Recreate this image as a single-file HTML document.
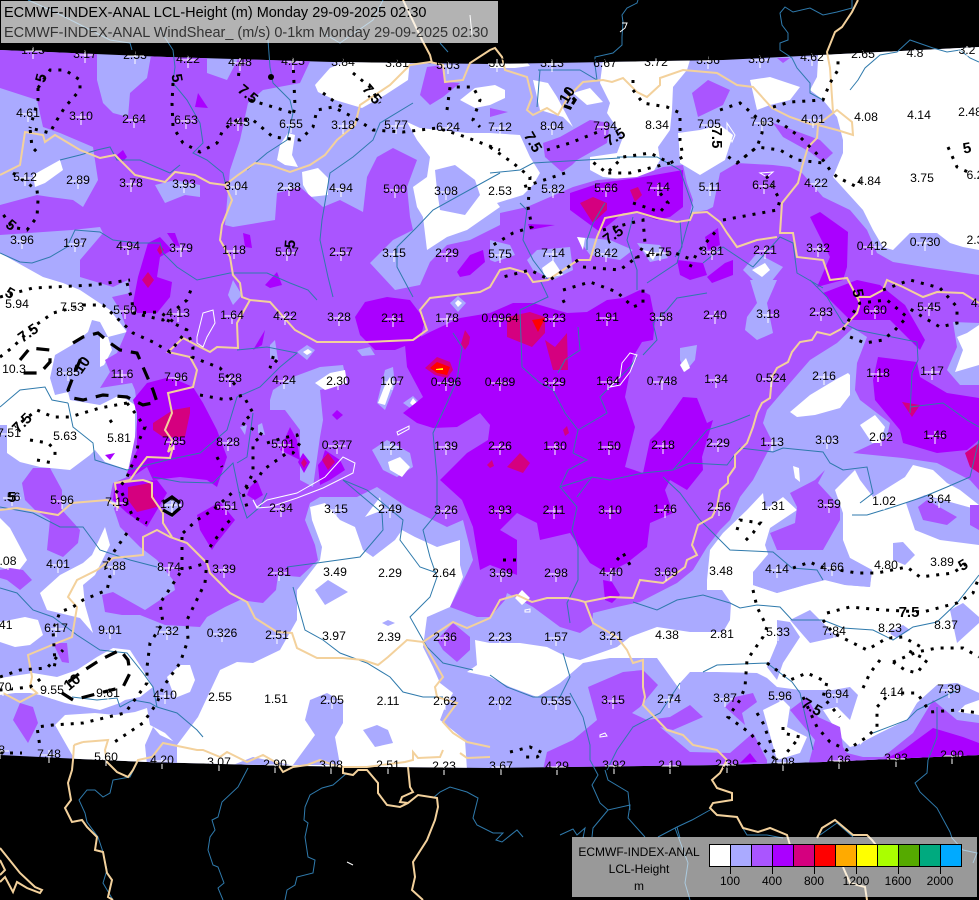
<!DOCTYPE html>
<html><head><meta charset="utf-8"><title>ECMWF-INDEX-ANAL LCL-Height</title>
<style>
html,body{margin:0;padding:0;background:#000;width:979px;height:900px;overflow:hidden}
svg{display:block;font-family:"Liberation Sans",sans-serif}
.w{fill:#fff}.l{fill:#aaf}.p{fill:#a5f}.d{fill:#a0f}.m{fill:#d5007f}
.r{fill:none;stroke:#2f7aac;stroke-width:1}
.b{fill:none;stroke:#f3d19c;stroke-width:2}
.k{fill:none;stroke:#fff;stroke-width:1}
.c{fill:none;stroke:#000;stroke-width:3;stroke-dasharray:3 7}
.e{fill:none;stroke:#000;stroke-width:3.2;stroke-dasharray:13 9}
.t text{font-size:12.2px;text-anchor:middle;fill:#000}
.q text{font-size:15px;font-weight:bold;text-anchor:middle;fill:#000}
.x use{stroke:#fff;stroke-width:1}
</style></head><body>
<svg xmlns="http://www.w3.org/2000/svg" width="979" height="900" viewBox="0 0 979 900">
<defs>
<clipPath id="mp"><polygon points="0,50 167,57 333,62 490,64 723,60 979,47 979,755 823,762 717,765 490,768 300,766 147,762 80,759 0,755"/></clipPath>
<path id="c" d="M-9 1h18M0-4v13"/>
</defs>
<rect width="979" height="900" fill="#000"/>
<g clip-path="url(#mp)">
<rect width="979" height="900" class="l"/>
<g class="w">
<polygon points="315,85 330,68 350,60 410,60 408,80 385,95 362,108 335,100 318,92"/>
<polygon points="33,175 60,160 63,170 45,183 35,187"/>
<polygon points="8,207 25,207 27,215 15,218"/>
<polygon points="0,253 43,277 63,283 80,290 110,310 127,332 108,337 100,322 92,320 88,332 72,345 55,355 50,378 55,395 68,392 70,400 100,405 120,395 135,405 135,440 128,470 105,462 95,450 90,455 70,470 40,467 20,462 7,453 7,425 0,425"/>
<polygon points="100,337 108,337 112,350 104,365 100,367"/>
<polygon points="0,518 10,528 18,543 27,560 17,573 0,567"/>
<polygon points="105,527 110,545 95,575 83,585 85,605 93,633 80,618 47,610 40,593 60,575 83,563 92,555"/>
<polygon points="0,622 25,617 38,620 43,635 30,645 15,647 0,642"/>
<polygon points="0,678 33,673 57,677 77,670 97,657 113,648 130,650 143,670 153,687 140,697 125,700 120,703 100,710 65,703 40,695 30,693 15,693 0,695"/>
<polygon points="167,677 180,665 190,665 195,680 190,692 175,698"/>
<polygon points="310,507 325,503 340,520 355,527 363,550 373,557 395,540 402,530 415,537 437,547 460,540 460,565 463,577 450,607 427,617 423,647 433,667 440,683 453,693 445,707 440,720 465,740 467,770 110,770 75,760 55,725 65,715 95,713 115,715 135,712 147,708 150,725 165,733 177,745 198,717 220,670 237,662 253,663 280,650 297,620 297,590 307,577 320,560 322,547 312,520"/>
<polygon points="475,640 490,643 520,643 547,647 567,657 580,660 617,647 630,637 657,627 690,632 723,632 730,620 731,603 722,590 707,590 707,580 710,550 723,533 747,510 763,493 765,510 783,497 797,510 770,528 765,545 770,560 753,572 753,585 777,593 805,585 825,580 845,585 870,587 872,570 850,558 843,540 843,513 835,490 855,470 860,480 873,497 905,477 913,465 933,470 947,483 960,490 979,505 979,693 957,683 937,685 917,703 907,720 880,733 857,745 850,760 800,760 680,690 657,658 610,658 583,663 560,683 537,697 510,687 490,677 467,672 477,665"/>
<polygon points="818,40 818,60 817,77 810,90 823,100 837,117 843,140 843,153 833,177 863,210 873,230 883,247 893,250 910,233 937,233 950,243 963,247 979,250 979,40"/>
<polygon points="957,337 967,333 979,325 979,365 955,372 963,350"/>
<polygon points="407,122 420,128 467,133 490,133 520,135 530,157 540,173 533,185 523,195 497,203 500,207 467,230 447,237 427,250 423,217 417,207 413,187 427,177 430,157 417,140"/>
<polygon points="460,100 475,88 495,85 505,90 505,98 490,105 475,108"/>
<polygon points="480,290 487,275 495,268 500,267 500,290"/>
<polygon points="277,160 280,145 288,133 295,135 292,155 298,167 285,165"/>
<polygon points="302,172 318,168 328,178 328,195 310,197 303,185"/>
<polygon points="533,80 548,83 557,97 573,127 563,117 540,110 537,97"/>
<polygon points="573,93 590,88 603,102 587,105"/>
<polygon points="603,60 600,83 610,103 607,113 623,137 617,153 590,157 590,170 603,177 630,180 647,183 660,160 658,147 670,130 672,110 673,87 687,70 690,60"/>
<polygon points="678,133 700,130 720,125 733,135 725,160 700,175 680,163 679,145"/>
<polygon points="750,80 770,77 800,87 790,100 770,105 757,110"/>
<polygon points="490,60 525,60 530,66 515,68 490,68"/>
</g>
<g class="l">
<polygon points="435,170 455,165 475,180 480,195 465,215 440,210 437,190"/>
<polygon points="315,590 328,580 348,592 325,605"/>
<polygon points="382,623 388,620 395,623 388,626"/>
<polygon points="305,720 310,700 327,693 343,702 343,723 335,737 340,765 293,765 315,735"/>
<polygon points="363,730 377,725 388,730 393,743 375,747"/>
<polygon points="233,765 253,757 290,765"/>
<polygon points="145,745 153,727 160,735 177,743 177,765 147,765"/>
<polygon points="790,620 810,610 837,637 810,643"/>
<polygon points="777,620 790,622 800,637 783,663 777,680 767,667 777,643"/>
<polygon points="950,610 963,603 979,617 979,623 957,643"/>
<polygon points="887,632 903,625 910,630 897,638"/>
<polygon points="680,683 690,672 717,672 757,673 767,678 777,687 800,690 833,690 850,687 858,695 850,720 837,707 823,710 843,740 850,747 857,745 880,733 907,720 917,703 937,685 957,683 979,693 979,770 680,770"/>
<polygon points="906,503 925,495 979,510 979,545 940,540 915,530"/>
<polygon points="893,543 903,542 915,555 905,565 893,560"/>
<polygon points="753,585 777,593 805,585 825,580 845,585 870,587 872,570 850,558 810,560 770,552 753,572"/>
</g>
<g class="w">
<polygon points="763,710 783,700 790,707 787,727 807,737 800,753 777,760"/>
<polygon points="979,700 965,705 958,712 979,715"/>
<polygon points="860,720 895,690 905,690 917,703 905,715 880,725 860,745"/>
</g>
<g class="p">
<polygon points="0,40 97,40 97,80 103,103 113,113 128,117 130,93 147,78 152,50 207,50 207,73 227,80 240,55 313,55 300,83 263,90 248,103 240,140 230,170 228,190 225,225 233,227 275,220 277,193 300,187 323,207 340,200 363,212 367,177 377,157 393,148 417,160 407,187 410,217 413,230 393,240 370,263 395,290 420,285 430,262 447,245 470,240 500,225 500,213 527,207 550,197 573,187 597,180 637,177 663,167 683,165 687,183 693,200 690,213 707,210 713,207 720,173 737,163 773,165 790,167 802,173 823,197 850,210 867,230 877,253 893,262 930,268 979,275 979,323 953,322 957,347 947,370 960,385 979,385 979,490 970,480 937,463 903,458 853,453 887,437 890,423 860,400 855,390 857,363 867,337 853,328 837,343 810,360 790,383 767,410 763,423 773,443 767,453 753,480 740,497 730,520 720,530 707,547 693,570 677,583 640,602 617,607 593,613 592,625 580,633 560,627 533,607 507,593 505,600 490,617 477,617 450,607 467,573 473,560 463,520 447,527 433,520 407,507 377,487 357,497 320,497 310,503 305,520 315,545 318,560 300,577 278,575 276,590 263,603 240,600 225,607 207,617 200,627 165,625 140,615 122,615 105,612 102,595 113,592 145,610 175,590 173,580 157,560 140,547 120,527 110,497 113,483 127,477 135,437 138,413 135,390 132,383 100,388 110,372 105,360 117,353 127,330 120,310 112,297 130,293 128,280 113,287 80,277 80,260 103,233 100,227 72,230 0,235 0,205 37,195 50,197 73,200 83,207 98,180 93,147 60,133 43,127 37,100 0,88"/>
<polygon points="825,470 818,483 840,507 840,520 823,550 777,550 770,533 795,523 797,507 790,493 815,480"/>
<polygon points="22,483 33,468 50,468 62,490 62,510 80,530 78,543 63,557 47,550 50,520 35,510 25,500"/>
<polygon points="0,570 10,568 23,570 32,580 20,590 7,580 0,578"/>
<polygon points="53,643 67,643 69,663 62,662"/>
<polygon points="13,720 20,703 33,707 38,723 28,743"/>
<polygon points="437,640 453,623 470,637 470,650 457,662 443,650"/>
<polygon points="918,507 927,500 957,517 947,525 923,520"/>
<polygon points="970,505 979,505 979,530 970,525"/>
<polygon points="773,123 785,127 820,140 833,153 823,162 810,152 783,137"/>
<polygon points="490,108 508,112 490,117"/>
<polygon points="692,93 708,80 730,90 723,105 698,117"/>
<polygon points="543,143 560,137 590,120 610,123 607,143 577,160 572,165 562,172 545,157"/>
<polygon points="427,67 443,65 445,82 460,83 443,97 430,105 420,95"/>
<polygon points="777,58 790,58 783,63"/>
<polygon points="588,687 623,672 643,670 658,685 640,707 632,713 647,720 670,717 690,705 703,717 673,730 660,727 690,752 730,753 753,733 767,760 767,770 543,770 547,752 573,740 597,720"/>
<polygon points="725,707 735,697 753,693 757,702 742,713 745,725"/>
<polygon points="790,710 807,697 818,717 840,727 843,747 847,753 863,757 883,757 913,733 933,700 957,720 979,723 979,770 807,770 815,740 800,722"/>
</g>
<g class="l">
<polygon points="155,185 175,180 200,185 200,197 185,195 165,203"/>
<polygon points="233,280 242,295 233,305 228,295"/>
<polygon points="270,400 273,390 293,377 320,367 343,365 347,383 320,390 323,420 320,437 313,487 300,480 300,430 285,410 270,410"/>
<polygon points="377,403 385,370 393,367 395,385 385,410"/>
<polygon points="403,403 413,396 420,403 413,410"/>
<polygon points="372,450 387,440 410,453 413,467 397,477 383,470"/>
<polygon points="517,407 520,402 530,417 522,434 517,425"/>
<polygon points="522,367 533,370 547,380 570,377 587,370 600,383 590,397 573,407 560,410 553,393 537,400 523,383"/>
<polygon points="587,347 593,355 587,365 580,360"/>
<polygon points="588,470 610,457 613,470 607,473"/>
<polygon points="678,437 685,420 693,437 682,435"/>
<polygon points="680,360 680,348 697,345 695,360 685,372"/>
<polygon points="750,280 777,280 767,303 773,333 757,340 745,330 747,317 757,303"/>
<polygon points="527,260 537,250 570,247 573,270 553,280 533,270"/>
<polygon points="577,237 610,240 633,250 620,260 590,255"/>
<polygon points="743,270 757,253 783,267 767,287 753,280"/>
<polygon points="490,240 510,245 515,255 495,262 490,260"/>
<polygon points="637,243 660,245 668,258 650,262"/>
<polygon points="297,352 307,345 315,350 307,360"/>
<polygon points="450,303 458,296 466,303 458,312"/>
<polygon points="357,350 370,347 375,355 362,356"/>
<polygon points="465,385 472,375 475,390 468,392"/>
<polygon points="270,345 275,340 278,360 270,358"/>
<polygon points="240,427 247,425 245,435"/>
<polygon points="258,425 262,423 265,435 258,433"/>
<polygon points="162,505 172,497 182,505 172,518"/>
<polygon points="92,500 105,495 118,505 105,515 95,510"/>
</g>
<g class="w">
<polygon points="315,383 330,373 345,370 347,383 325,390"/>
<polygon points="378,403 385,385 390,377 392,385 385,405"/>
<polygon points="410,403 413,398 417,403 413,406"/>
<polygon points="388,462 400,457 410,467 402,477 390,470"/>
<polygon points="303,352 308,349 312,352 307,355"/>
<polygon points="455,303 458,300 462,303 458,307"/>
<polygon points="365,517 380,497 383,510 370,515"/>
<polygon points="680,365 686,358 690,368 684,372"/>
<polygon points="542,268 553,260 563,275 545,278"/>
<polygon points="577,237 585,238 583,250"/>
<polygon points="643,250 657,253 653,260"/>
<polygon points="752,270 765,263 770,270 762,277"/>
<polygon points="790,412 810,395 835,380 848,373 850,375 850,395 840,408 815,415 797,417"/>
<polygon points="860,425 875,415 885,427 880,443 872,443"/>
<polygon points="793,466 799,468 800,482 795,478"/>
<polygon points="515,598 522,590 530,598 522,605"/>
</g>
<g class="d">
<polygon points="355,317 365,302 387,297 410,300 425,320 420,340 395,350 375,350 360,335"/>
<polygon points="405,345 430,332 445,325 460,318 490,313 513,303 533,303 567,313 587,312 607,300 623,298 640,290 650,295 655,320 653,340 642,342 633,357 625,397 635,427 625,467 643,473 650,440 660,430 683,397 697,398 707,423 713,420 702,457 703,470 687,490 670,480 665,490 673,513 650,523 647,547 627,563 607,573 590,563 570,533 540,540 537,523 517,513 500,530 517,540 517,575 490,565 480,570 473,527 462,500 440,480 467,453 488,440 490,425 480,413 457,427 433,428 417,423 403,413 423,397 407,367"/>
<polygon points="133,400 147,383 170,377 193,387 203,403 217,430 227,457 217,487 207,480 180,477 153,480 147,467 132,477 127,473 137,450 137,413"/>
<polygon points="115,483 113,500 127,513 147,527 157,510 167,493 157,480"/>
<polygon points="197,515 220,502 235,520 215,545 212,550 200,530"/>
<polygon points="570,193 600,183 637,178 683,170 683,207 670,217 657,220 637,213 623,213 600,232 570,210"/>
<polygon points="322,460 325,450 340,460 345,470 330,480 320,485 318,465"/>
<polygon points="298,462 303,453 310,462 304,473"/>
<polygon points="280,450 290,427 297,440 300,460 290,455"/>
<polygon points="250,487 257,480 263,495 255,500 247,495"/>
<polygon points="332,415 337,410 343,415 337,420"/>
<polygon points="253,350 265,330 262,345"/>
<polygon points="117,155 123,150 127,157 122,162"/>
<polygon points="195,107 198,93 208,108"/>
<polygon points="148,243 160,237 172,250 160,257 157,277 172,282 170,297 157,313 137,313 133,303 138,277 143,260"/>
<polygon points="167,233 175,233 180,247 175,245"/>
<polygon points="243,233 250,235 252,248 245,247"/>
<polygon points="265,285 277,272 282,285 270,288"/>
<polygon points="457,272 470,255 483,250 485,262 470,275 460,277"/>
<polygon points="677,260 703,263 707,275 690,280 680,275"/>
<polygon points="707,277 725,263 733,260 733,275 712,283"/>
<polygon points="705,237 718,228 720,245 708,250"/>
<polygon points="528,224 555,225 530,230"/>
<polygon points="810,217 820,212 848,232 847,267 843,280 817,287 823,273 830,257"/>
<polygon points="878,357 917,362 920,377 947,393 979,398 979,440 967,450 937,453 903,443 900,430 875,400 873,380"/>
<polygon points="823,293 857,280 880,285 905,305 925,340 920,350 890,320 870,320 850,320"/>
<polygon points="603,580 612,582 620,595 612,603 605,600"/>
<polygon points="883,760 903,750 933,728 963,737 979,743 979,770 883,770"/>
<polygon points="740,763 750,753 757,762"/>
<polygon points="105,455 115,453 110,460"/>
</g>
<g class="m">
<polygon points="153,423 173,410 190,407 190,413 185,437 163,437 153,430"/>
<polygon points="128,487 150,483 153,493 157,507 137,512 128,500"/>
<polygon points="507,317 530,312 545,317 545,333 532,347 507,337"/>
<polygon points="545,340 555,347 567,333 568,370 553,370"/>
<polygon points="507,467 520,453 530,463 523,473"/>
<polygon points="580,203 593,197 607,203 607,210 593,223"/>
<polygon points="630,190 638,187 642,195 635,202"/>
<polygon points="425,368 437,357 450,362 453,370 447,378 435,375"/>
<polygon points="465,330 470,337 469,344 465,350 461,344"/>
<polygon points="322,460 328,453 335,462 328,470"/>
<polygon points="148,272 154,280 148,288 142,280"/>
<polygon points="160,245 164,250 160,255 157,250"/>
<polygon points="902,402 920,405 912,417"/>
<polygon points="965,453 979,443 979,473 970,467"/>
<polygon points="487,465 492,460 494,466 490,468"/>
<polygon points="563,430 567,426 569,433 565,436"/>
<polygon points="301,463 304,458 307,463 304,468"/>
</g>
<polygon points="532,320 545,318 538,332" fill="#f00"/>
<polygon points="430,368 437,362 450,367 447,375 437,373" fill="#f00"/>
<polygon points="436,369 443,368 443,370 436,370" fill="#ff0"/>
</g>
<g class="r">
<path d="M160 30L173 50 175 67 173 83 187 100 200 123 203 143 193 153 207 160 223 173 227 190"/>
<path d="M268 40L270 67 273 83 290 100 293 113 287 140 267 153 247 170"/>
<path d="M0 253L20 262 32 263 50 257 67 247 75 230 100 232 113 240 137 243 160 243 163 253 177 267 197 280 230 273 267 273 290 283 308 290 317 300"/>
<path d="M500 173L433 210 417 227 397 247 397 267 413 297"/>
<path d="M413 103L380 123 373 140 353 157 330 173 322 220 320 240 328 277 333 297"/>
<path d="M60 160L80 155 97 150 110 147 117 160 140 160 170 173 180 165"/>
<path d="M68 403L73 427 93 443 95 460 127 470 167 460 200 453 227 430 237 397 260 387 280 367 297 353 267 347 237 350"/>
<path d="M153 477L180 482 213 483 233 463 240 497 247 518 260 507 267 493"/>
<path d="M453 333L462 347 457 380 447 403 433 433 437 477 437 513 423 530 430 557 437 577 430 597 410 617 427 647 443 663 473 670"/>
<path d="M343 480L367 490 403 520 400 540 420 567 437 573"/>
<path d="M293 587L305 630 323 640 340 653 367 663 390 677 403 692 423 697 443 697"/>
<path d="M157 707L177 713 197 730 203 737"/>
<path d="M287 567L317 563 360 557 383 530 382 513 343 480"/>
<path d="M253 413L247 457 237 463"/>
<path d="M540 280L548 297 520 310 522 367 540 383 553 390 565 413 578 430 573 453 587 460 568 470 560 487 577 507 572 530 578 547 578 580 567 603 570 623"/>
<path d="M578 327L580 350 565 360 558 373"/>
<path d="M643 355L657 340 653 323 667 310 677 298 707 293"/>
<path d="M637 357L630 367 620 377 600 397 607 413 590 423 578 430"/>
<path d="M560 487L592 477 610 480 643 473 673 470 690 463 727 465 740 448 773 452 783 448 823 452 830 463 843 470 867 467 873 493 860 503"/>
<path d="M673 470L707 430 730 423 750 415"/>
<path d="M663 477L680 493 700 520 720 540 730 550 773 552 792 568 817 570 823 580"/>
<path d="M592 477L577 497"/>
<path d="M852 515L867 515 893 507 923 497 947 487 970 477 979 440"/>
<path d="M810 280L827 297 843 323 857 330 917 342 918 360 912 373 910 413"/>
<path d="M910 407L943 403 967 420 979 427"/>
<path d="M538 70L580 70 597 80 595 65 595 57 613 53 622 45 622 37 623 22 622 15 627 8 637 3 638 0"/>
<path d="M540 70L537 107"/>
<path d="M490 173L520 170 533 163 620 158"/>
<path d="M617 157L657 157 680 170 693 207 687 227 677 263 647 283"/>
<path d="M633 217L627 240 637 270 637 290"/>
<path d="M520 203L527 210 523 240 533 260 548 280"/>
<path d="M605 203L593 223 587 240 587 250"/>
<path d="M852 0L852 8 837 12 823 15 810 8 793 12 785 7 780 13 782 25 788 33 788 40 780 43 780 50 792 58 797 68 810 83 810 93 823 100"/>
<path d="M850 90L858 80 865 68 880 55 897 52 910 40 933 48 947 52 960 50 970 58 979 62"/>
<path d="M703 263L723 247 753 267 780 237 793 243 797 273 823 288"/>
<path d="M680 220L682 247 675 257"/>
<path d="M490 675L507 687 533 697 560 697 570 677 563 653"/>
<path d="M570 693L583 717 590 745 590 760 598 775 592 785 600 803 608 810 630 805 628 818 645 837"/>
<path d="M605 770L608 780 628 792 630 810"/>
<path d="M608 810L593 828 592 837"/>
<path d="M560 835L573 829 577 835 585 828 583 838"/>
<path d="M710 810L692 820 677 827 658 837"/>
<path d="M677 827L680 838"/>
<path d="M742 827L747 835 767 835 783 838"/>
<path d="M820 835L837 823 853 837"/>
<path d="M928 760L927 773 915 783 920 792 937 808 950 832 952 838 963 850 977 853 973 863"/>
<path d="M633 602L657 610 677 600 703 595 730 603 740 608 757 605 780 607 792 620 823 620 843 628 873 630 893 640 913 627 937 622 957 603 979 575"/>
<path d="M703 672L717 665 767 663 792 682 800 693 813 750"/>
<path d="M680 683L660 713 633 727 617 750 607 770"/>
<path d="M937 707L937 737 928 760"/>
<path d="M873 733L907 720 917 710 937 700 957 690"/>
<path d="M137 763L130 777 113 780 110 793 103 797 95 790 87 790 79 800 85 813 87 822 98 837 103 852 107 870 103 883 113 900"/>
<path d="M248 768L238 787 222 802 218 817 212 820 215 830 210 837 208 850 213 865 218 867 224 883 218 888 223 900"/>
<path d="M347 773L333 785 322 788 310 795 305 807 304 820 308 823 305 837 308 857 315 860 313 873 297 877 295 885 287 890 285 900"/>
<path d="M433 798L440 792 450 787 467 792 478 798 473 818 477 825 493 833 503 833 496 840 502 842 517 830 523 837"/>
<path d="M688 863L685 883 690 900"/>
<path d="M675 828L688 863"/>
<path d="M28 0L57 13 110 40 130 43 132 50"/>
<path d="M323 33L340 43 373 20 383 0"/>
<path d="M440 43L448 52"/>
<path d="M0 407L20 390 45 387 52 400 68 403"/>
<path d="M0 507L33 513 60 527 83 527 100 550 130 560 157 567"/>
<path d="M0 588L17 593 33 610 53 617 77 635 100 650 127 653 143 673 153 687 157 707"/>
<path d="M120 707L133 700 150 703 157 707"/>
<path d="M72 697L97 700 117 698 120 707"/>
</g>
<g class="b">
<path d="M0 175L10 170 20 165 25 132 43 135 45 142 55 135 80 150 100 158 115 155 135 175 165 182 175 172 195 175 210 183 225 185 232 200 222 225 220 240 230 257 233 275 240 283 242 297 250 300"/>
<path d="M225 185L238 175 255 163 270 165 290 172 310 165 325 155 337 140 355 125 360 105 390 85 410 65 430 62 443 65 445 82 463 80 470 63 490 50 495 48 502 57 505 70 527 77 532 97 527 110 533 115 547 108 558 115 568 97 583 82 603 80 612 82 623 78 637 92 647 97 660 85 660 78 683 70 717 73 737 85 753 87 772 108 790 117 813 125 820 123 837 110 852 122 853 135 837 130 818 125 817 138 808 147 802 167 798 183 782 203 780 233 793 233 797 257 823 260 830 280 847 278 857 297 860 303 857 313 843 328 830 335 817 332 812 340 800 342 792 352 788 362 777 368 772 377 770 398 762 403 757 413 753 427 747 443 735 455 735 467 728 477 728 483 720 490 717 507 712 517 698 525 692 545 697 555 687 560 685 567 663 583 640 580 633 598 610 597 585 602 578 600 567 598 547 598 532 602 517 595 500 600 490 618 467 628 453 622 423 642 407 640 388 657 378 665 363 660 343 658 317 658 297 648 292 633 277 632 255 618 247 602 230 593 217 580 210 573 207 563 187 543 170 537 157 530 143 537 143 547"/>
<path d="M403 0L422 40 430 55 432 63"/>
<path d="M833 112L830 68 827 52 835 32 842 27 852 12 858 0"/>
<path d="M115 483L143 480 152 483 152 497 163 513 163 523 172 537"/>
<path d="M0 510L17 508 58 515 72 503 107 500 118 507 115 483 130 480 137 470 147 457 170 458 173 447 168 452 172 440 165 430 172 413 168 393 193 387 197 370 190 357 168 352 183 338 200 347 210 352 217 347 238 348 237 323 250 300 270 302 295 330 317 342 367 342 413 340 427 330 420 310 430 298 480 292 490 287 500 270 510 268 527 273 533 282 548 280 578 260 590 260 597 237 605 218 637 212 657 218 677 222 690 220 693 213 707 212 720 222 727 233 737 247 757 240 777 237"/>
<path d="M857 297L870 297 883 290 887 280 903 287 923 297 937 292 963 293 979 303"/>
<path d="M143 537L143 555 113 558 97 570 77 580 68 597 77 607 72 637 52 645 28 655 32 677 30 687 37 693 20 702 3 693"/>
<path d="M74 745L73 760 72 770 68 783 71 800 65 808 72 822 82 820 87 827 97 837 95 850 103 852 107 873 112 880 108 897 113 900"/>
<path d="M83 742L108 740 105 750 107 762 117 772 128 777 133 770 138 760 152 757 163 743 197 750 203 750 220 757 227 752 247 762 263 755 277 763 283 772 293 767 307 765 320 760 333 765 343 767 343 773 353 775 358 770 367 770 378 783 378 793 387 805 400 807 408 803 418 795 437 798 438 807 435 820 427 840 413 862 415 877 412 890 423 900"/>
<path d="M83 742L74 745"/>
<path d="M408 767L410 787 413 792 402 797 400 802 408 803"/>
<path d="M343 767L367 767 405 762 413 760 413 752 418 758 440 757 443 750"/>
<path d="M0 848L20 873 35 887 42 890 40 893 27 888 17 882 13 892 5 877 0 882"/>
<path d="M0 860L5 870 0 875"/>
<path d="M423 642L443 677 435 687 437 697 457 703 443 722 453 733 467 742 490 747"/>
<path d="M460 753L467 758 490 757"/>
<path d="M585 602L593 623 617 637 627 650 633 663 643 660 643 687 645 697 643 705 667 730 683 735 693 745 717 750 727 760 720 773 712 780 717 788 732 793 732 800 713 803 710 808 717 815 737 817 743 828 758 832 770 828 787 835 790 845"/>
<path d="M817 838L822 828 835 820 853 835 867 835 872 840 880 850"/>
<path d="M843 867L850 883 865 887 867 900"/>
</g>
<g class="k">
<path d="M197 337L203 313 213 310 215 323 207 337 203 347 197 343Z"/>
<path d="M253 500L257 507 267 500 297 493 325 477 343 457 355 463 353 473 323 488 297 498 270 507 257 508Z"/>
<path d="M397 432L409 426 409 429 398 435Z"/>
<path d="M622 363L630 353 637 355 630 372 620 385 610 387 620 377Z"/>
<path d="M727 123L735 135 732 142 727 130Z"/>
<path d="M760 173L773 172 767 177Z"/>
<path d="M525 610L530 609 530 612 525 612Z"/>
<path d="M600 735L605 733 607 736 600 737Z"/>
<path d="M347 862L353 865"/>
<path d="M622 23L627 23 625 28 620 32"/>
<path d="M470 15L472 35"/>
</g>
<g class="c">
<path d="M38 88L50 70 65 70 80 80 80 90 65 107 55 123 50 133 30 128 32 147 40 155"/>
<path d="M38 88L38 100 30 128"/>
<path d="M13 173L37 190 38 200 37 217 27 230 12 227 0 210"/>
<path d="M173 83L172 103 173 127 183 143 200 152 217 143 223 130 237 120 253 120 273 137 300 140 313 127 317 110 333 107 353 117 373 130 403 132 437 128 460 135 500 150"/>
<path d="M293 60L295 107 293 115"/>
<path d="M240 63L238 80"/>
<path d="M323 93L343 108"/>
<path d="M250 100L293 113"/>
<path d="M353 73L370 87 380 103"/>
<path d="M447 110L450 87 473 87 480 100 473 120 480 127"/>
<path d="M490 147L513 163 530 177 528 207 532 227 513 233 490 247"/>
<path d="M633 80L633 90 643 103 667 107 680 113 680 140 683 157 670 163 650 153 623 157 607 173 590 160"/>
<path d="M670 163L630 173 607 173"/>
<path d="M720 110L740 103 763 123 762 133 757 147 737 163 723 153"/>
<path d="M773 107L790 102 823 100 830 83 838 70 838 60"/>
<path d="M777 120L800 137 823 160 830 170 837 177 857 187 863 177"/>
<path d="M737 163L757 147 780 150 797 160 823 163"/>
<path d="M633 203L660 212 668 203 660 193"/>
<path d="M723 220L777 210 780 200 763 170"/>
<path d="M565 173L523 187"/>
<path d="M547 150L570 143 603 130"/>
<path d="M690 267L697 253 717 230"/>
<path d="M583 267L620 270 633 260"/>
<path d="M603 230L643 220 645 243 637 257 667 253 675 253 693 260"/>
<path d="M578 260L550 280 530 270 503 277"/>
<path d="M948 147L957 167 970 173"/>
<path d="M843 330L853 313 860 303 887 300 907 317 895 330 883 340 865 343 850 337"/>
<path d="M883 290L910 280 940 288 957 307 957 323 940 327 923 317 907 307"/>
<path d="M563 290L590 282 617 292 633 307 643 303 643 287"/>
<path d="M563 300L567 308"/>
<path d="M737 530L740 520 760 523 753 533 743 543"/>
<path d="M617 560L623 553 633 570"/>
<path d="M503 560L520 560"/>
<path d="M793 568L810 562 820 567 857 573 877 573 907 567 920 577 953 573 967 563"/>
<path d="M827 613L850 607 883 610 923 612 957 603 973 593 979 577"/>
<path d="M823 620L833 633 867 650 887 638 903 637 923 648"/>
<path d="M893 662L917 652 937 648 963 648 979 657"/>
<path d="M893 662L905 670 917 673 927 660 907 650"/>
<path d="M880 660L870 673 863 688"/>
<path d="M753 590L757 607 767 627 763 637 747 660 745 687 740 700 728 717 750 733 767 753 777 760"/>
<path d="M757 713L763 723 777 760"/>
<path d="M767 663L790 680 807 673 827 682 823 697 840 717"/>
<path d="M803 697L817 727 830 742 847 750 867 737 877 727 877 707 890 693 917 693 930 712 957 710 979 713"/>
<path d="M783 727L783 733 800 737 793 745 783 757"/>
<path d="M510 752L530 747 543 753 537 757 522 757"/>
<path d="M0 357L13 347 33 327 53 313 83 305 103 305 133 333 153 342 170 352 187 330"/>
<path d="M0 297L33 288 93 285 130 280"/>
<path d="M127 283L132 300 133 313 163 320 187 300 192 287"/>
<path d="M133 313L160 312 175 323"/>
<path d="M167 320L187 330 193 347 192 357 220 368 238 388"/>
<path d="M200 395L227 400 243 395 253 413 242 423 263 435 253 443 253 473 243 493 247 507"/>
<path d="M267 443L283 438 297 435 300 443 293 453 287 453 263 470 257 480 240 493"/>
<path d="M277 360L270 368 275 350"/>
<path d="M217 457L222 467"/>
<path d="M127 403L100 408 70 417 53 417 37 410 15 427"/>
<path d="M127 403L135 413 145 427 138 443 137 453 127 477 113 497"/>
<path d="M30 440L48 443 55 450 55 457"/>
<path d="M37 460L53 463"/>
<path d="M110 420L115 427"/>
<path d="M122 493L133 517 147 523"/>
<path d="M127 533L113 553 105 565 110 577 107 590 83 600 73 607 60 612 53 630 55 663 53 673"/>
<path d="M183 533L197 520 213 510 233 492"/>
<path d="M210 547L227 523 233 518"/>
<path d="M182 537L182 570 207 563"/>
<path d="M207 560L205 583 187 620 188 640 180 663 163 687 157 703 143 723 113 743"/>
<path d="M180 573L167 593 160 603 163 623 150 643 147 667 147 683 125 713 83 723 53 725 37 727 40 747"/>
<path d="M0 677L20 670 47 668 63 650"/>
<path d="M0 690L30 687 43 677"/>
<path d="M0 753L22 753"/>
</g>
<g class="e">
<path d="M20 360L30 348 50 350 50 362 40 373 30 373 17 373"/>
<path d="M73 343L83 337 98 333 110 343 120 350 137 353 143 367 153 390 157 402 143 405 127 397 103 395 83 400 73 398 68 390 73 377 83 353"/>
<path d="M62 693L73 700 100 693 123 687 130 673 128 660 120 650 100 660 80 673 67 683"/>
<path d="M163 503L172 497 180 503" stroke-dasharray="none"/>
<path d="M163 510L172 515 180 508" stroke-dasharray="none"/>
<path d="M565 90L575 100 570 108 562 105" stroke-dasharray="8 3"/>
</g>
<circle cx="271" cy="77" r="3" fill="#000"/>
<g class="x">
<use href="#c" x="33" y="50"/><use href="#c" x="85" y="54"/><use href="#c" x="135" y="55"/><use href="#c" x="188" y="59"/><use href="#c" x="240" y="62"/><use href="#c" x="293" y="61"/><use href="#c" x="343" y="62"/><use href="#c" x="397" y="63"/><use href="#c" x="448" y="65"/><use href="#c" x="497" y="63"/><use href="#c" x="552" y="63"/><use href="#c" x="605" y="63"/><use href="#c" x="656" y="62"/><use href="#c" x="708" y="60"/><use href="#c" x="760" y="59"/><use href="#c" x="812" y="57"/><use href="#c" x="863" y="54"/><use href="#c" x="915" y="53"/><use href="#c" x="967" y="50"/>
<use href="#c" x="28" y="113"/><use href="#c" x="81" y="116"/><use href="#c" x="134" y="119"/><use href="#c" x="186" y="120"/><use href="#c" x="238" y="122"/><use href="#c" x="291" y="124"/><use href="#c" x="343" y="125"/><use href="#c" x="396" y="125"/><use href="#c" x="448" y="127"/><use href="#c" x="500" y="127"/><use href="#c" x="552" y="126"/><use href="#c" x="605" y="126"/><use href="#c" x="657" y="125"/><use href="#c" x="709" y="124"/><use href="#c" x="762" y="122"/><use href="#c" x="813" y="119"/><use href="#c" x="866" y="117"/><use href="#c" x="919" y="115"/><use href="#c" x="970" y="112"/>
<use href="#c" x="25" y="177"/><use href="#c" x="78" y="180"/><use href="#c" x="131" y="183"/><use href="#c" x="184" y="184"/><use href="#c" x="236" y="186"/><use href="#c" x="289" y="187"/><use href="#c" x="341" y="188"/><use href="#c" x="395" y="189"/><use href="#c" x="446" y="191"/><use href="#c" x="500" y="191"/><use href="#c" x="553" y="189"/><use href="#c" x="606" y="188"/><use href="#c" x="658" y="187"/><use href="#c" x="710" y="187"/><use href="#c" x="764" y="185"/><use href="#c" x="816" y="183"/><use href="#c" x="869" y="181"/><use href="#c" x="922" y="178"/><use href="#c" x="975" y="175"/>
<use href="#c" x="22" y="240"/><use href="#c" x="75" y="243"/><use href="#c" x="128" y="246"/><use href="#c" x="181" y="248"/><use href="#c" x="234" y="250"/><use href="#c" x="287" y="252"/><use href="#c" x="341" y="252"/><use href="#c" x="394" y="253"/><use href="#c" x="447" y="253"/><use href="#c" x="500" y="254"/><use href="#c" x="553" y="253"/><use href="#c" x="606" y="253"/><use href="#c" x="660" y="252"/><use href="#c" x="712" y="251"/><use href="#c" x="765" y="250"/><use href="#c" x="818" y="248"/><use href="#c" x="872" y="246"/><use href="#c" x="925" y="242"/><use href="#c" x="975" y="240"/>
<use href="#c" x="17" y="304"/><use href="#c" x="72" y="307"/><use href="#c" x="125" y="310"/><use href="#c" x="178" y="313"/><use href="#c" x="232" y="315"/><use href="#c" x="285" y="316"/><use href="#c" x="339" y="317"/><use href="#c" x="393" y="318"/><use href="#c" x="447" y="318"/><use href="#c" x="500" y="318"/><use href="#c" x="554" y="318"/><use href="#c" x="607" y="317"/><use href="#c" x="661" y="317"/><use href="#c" x="715" y="315"/><use href="#c" x="768" y="314"/><use href="#c" x="821" y="312"/><use href="#c" x="875" y="310"/><use href="#c" x="929" y="307"/>
<use href="#c" x="14" y="369"/><use href="#c" x="68" y="372"/><use href="#c" x="122" y="374"/><use href="#c" x="176" y="377"/><use href="#c" x="230" y="378"/><use href="#c" x="284" y="380"/><use href="#c" x="338" y="381"/><use href="#c" x="392" y="381"/><use href="#c" x="446" y="382"/><use href="#c" x="500" y="382"/><use href="#c" x="554" y="382"/><use href="#c" x="608" y="381"/><use href="#c" x="662" y="381"/><use href="#c" x="716" y="379"/><use href="#c" x="771" y="378"/><use href="#c" x="824" y="376"/><use href="#c" x="878" y="373"/><use href="#c" x="932" y="371"/>
<use href="#c" x="9" y="433"/><use href="#c" x="65" y="436"/><use href="#c" x="119" y="438"/><use href="#c" x="174" y="441"/><use href="#c" x="228" y="442"/><use href="#c" x="283" y="444"/><use href="#c" x="337" y="445"/><use href="#c" x="391" y="446"/><use href="#c" x="446" y="446"/><use href="#c" x="500" y="446"/><use href="#c" x="555" y="446"/><use href="#c" x="609" y="446"/><use href="#c" x="663" y="445"/><use href="#c" x="718" y="443"/><use href="#c" x="772" y="442"/><use href="#c" x="827" y="440"/><use href="#c" x="881" y="437"/><use href="#c" x="935" y="435"/>
<use href="#c" x="12" y="497"/><use href="#c" x="62" y="500"/><use href="#c" x="117" y="502"/><use href="#c" x="172" y="504"/><use href="#c" x="226" y="506"/><use href="#c" x="281" y="508"/><use href="#c" x="336" y="509"/><use href="#c" x="390" y="509"/><use href="#c" x="446" y="510"/><use href="#c" x="500" y="510"/><use href="#c" x="554" y="510"/><use href="#c" x="610" y="510"/><use href="#c" x="665" y="509"/><use href="#c" x="719" y="507"/><use href="#c" x="773" y="506"/><use href="#c" x="829" y="504"/><use href="#c" x="884" y="501"/><use href="#c" x="939" y="499"/>
<use href="#c" x="8" y="561"/><use href="#c" x="58" y="564"/><use href="#c" x="114" y="566"/><use href="#c" x="169" y="567"/><use href="#c" x="224" y="569"/><use href="#c" x="279" y="572"/><use href="#c" x="335" y="572"/><use href="#c" x="390" y="573"/><use href="#c" x="444" y="573"/><use href="#c" x="501" y="573"/><use href="#c" x="556" y="573"/><use href="#c" x="611" y="572"/><use href="#c" x="666" y="572"/><use href="#c" x="721" y="571"/><use href="#c" x="777" y="569"/><use href="#c" x="832" y="567"/><use href="#c" x="886" y="565"/><use href="#c" x="942" y="562"/>
<use href="#c" x="4" y="625"/><use href="#c" x="56" y="628"/><use href="#c" x="110" y="630"/><use href="#c" x="167" y="631"/><use href="#c" x="222" y="633"/><use href="#c" x="277" y="635"/><use href="#c" x="334" y="636"/><use href="#c" x="389" y="637"/><use href="#c" x="445" y="637"/><use href="#c" x="500" y="637"/><use href="#c" x="556" y="637"/><use href="#c" x="611" y="636"/><use href="#c" x="667" y="635"/><use href="#c" x="722" y="634"/><use href="#c" x="778" y="632"/><use href="#c" x="834" y="631"/><use href="#c" x="890" y="628"/><use href="#c" x="946" y="625"/>
<use href="#c" x="3" y="687"/><use href="#c" x="52" y="690"/><use href="#c" x="108" y="693"/><use href="#c" x="165" y="695"/><use href="#c" x="220" y="697"/><use href="#c" x="276" y="699"/><use href="#c" x="332" y="700"/><use href="#c" x="388" y="701"/><use href="#c" x="445" y="701"/><use href="#c" x="500" y="701"/><use href="#c" x="556" y="701"/><use href="#c" x="613" y="700"/><use href="#c" x="669" y="699"/><use href="#c" x="725" y="698"/><use href="#c" x="780" y="696"/><use href="#c" x="837" y="694"/><use href="#c" x="892" y="692"/><use href="#c" x="949" y="689"/>
<use href="#c" x="0" y="750"/><use href="#c" x="49" y="754"/><use href="#c" x="106" y="757"/><use href="#c" x="162" y="760"/><use href="#c" x="219" y="762"/><use href="#c" x="275" y="764"/><use href="#c" x="331" y="765"/><use href="#c" x="388" y="765"/><use href="#c" x="444" y="766"/><use href="#c" x="501" y="766"/><use href="#c" x="557" y="766"/><use href="#c" x="614" y="765"/><use href="#c" x="670" y="765"/><use href="#c" x="727" y="764"/><use href="#c" x="783" y="762"/><use href="#c" x="839" y="760"/><use href="#c" x="896" y="758"/><use href="#c" x="952" y="755"/>
</g>
<g class="q">
<text transform="translate(41 78) rotate(-75) translate(0 5)">5</text>
<text transform="translate(177 78) rotate(80) translate(0 5)">5</text>
<text transform="translate(248 94) rotate(40) translate(0 5)">7.5</text>
<text transform="translate(372 94) rotate(50) translate(0 5)">7.5</text>
<text transform="translate(11 225) rotate(40) translate(0 5)">5</text>
<text transform="translate(290 244) rotate(-85) translate(0 5)">5</text>
<text transform="translate(10 293) rotate(30) translate(0 5)">5</text>
<text transform="translate(28 333) rotate(-35) translate(0 5)">7.5</text>
<text transform="translate(82 365) rotate(-55) translate(0 5)">10</text>
<text transform="translate(22 423) rotate(-45) translate(0 5)">7.5</text>
<text transform="translate(12 497) translate(0 5)">5</text>
<text transform="translate(533 142) rotate(60) translate(0 5)">7.5</text>
<text transform="translate(615 137) rotate(-30) translate(0 5)">7.5</text>
<text transform="translate(567 95) rotate(-60) translate(0 5)">10</text>
<text transform="translate(717 138) rotate(90) translate(0 5)">7.5</text>
<text transform="translate(613 235) rotate(-35) translate(0 5)">7.5</text>
<text transform="translate(858 293) rotate(80) translate(0 5)">5</text>
<text transform="translate(967 148) rotate(-10) translate(0 5)">5</text>
<text transform="translate(963 565) rotate(-30) translate(0 5)">5</text>
<text transform="translate(909 612) translate(0 5)">7.5</text>
<text transform="translate(812 707) rotate(30) translate(0 5)">7.5</text>
<text transform="translate(72 682) rotate(-40) translate(0 5)">10</text>
</g>
<g class="t" transform="translate(0 4)">
<text x="33" y="50">1.25</text><text x="85" y="54">3.17</text><text x="135" y="55">2.53</text><text x="188" y="59">4.22</text><text x="240" y="62">4.48</text><text x="293" y="61">4.25</text><text x="343" y="62">3.84</text><text x="397" y="63">3.81</text><text x="448" y="65">5.03</text><text x="497" y="63">3.0</text><text x="552" y="63">3.13</text><text x="605" y="63">6.67</text><text x="656" y="62">3.72</text><text x="708" y="60">3.56</text><text x="760" y="59">3.67</text><text x="812" y="57">4.62</text><text x="863" y="54">2.65</text><text x="915" y="53">4.8</text><text x="967" y="50">3.2</text>
<text x="28" y="113">4.61</text><text x="81" y="116">3.10</text><text x="134" y="119">2.64</text><text x="186" y="120">6.53</text><text x="238" y="122">4.43</text><text x="291" y="124">6.55</text><text x="343" y="125">3.18</text><text x="396" y="125">5.77</text><text x="448" y="127">6.24</text><text x="500" y="127">7.12</text><text x="552" y="126">8.04</text><text x="605" y="126">7.94</text><text x="657" y="125">8.34</text><text x="709" y="124">7.05</text><text x="762" y="122">7.03</text><text x="813" y="119">4.01</text><text x="866" y="117">4.08</text><text x="919" y="115">4.14</text><text x="970" y="112">2.48</text>
<text x="25" y="177">5.12</text><text x="78" y="180">2.89</text><text x="131" y="183">3.78</text><text x="184" y="184">3.93</text><text x="236" y="186">3.04</text><text x="289" y="187">2.38</text><text x="341" y="188">4.94</text><text x="395" y="189">5.00</text><text x="446" y="191">3.08</text><text x="500" y="191">2.53</text><text x="553" y="189">5.82</text><text x="606" y="188">5.66</text><text x="658" y="187">7.14</text><text x="710" y="187">5.11</text><text x="764" y="185">6.54</text><text x="816" y="183">4.22</text><text x="869" y="181">4.84</text><text x="922" y="178">3.75</text><text x="975" y="175">6.2</text>
<text x="22" y="240">3.96</text><text x="75" y="243">1.97</text><text x="128" y="246">4.94</text><text x="181" y="248">3.79</text><text x="234" y="250">1.18</text><text x="287" y="252">5.07</text><text x="341" y="252">2.57</text><text x="394" y="253">3.15</text><text x="447" y="253">2.29</text><text x="500" y="254">5.75</text><text x="553" y="253">7.14</text><text x="606" y="253">8.42</text><text x="660" y="252">4.75</text><text x="712" y="251">3.81</text><text x="765" y="250">2.21</text><text x="818" y="248">3.32</text><text x="872" y="246">0.412</text><text x="925" y="242">0.730</text><text x="975" y="240">2.3</text>
<text x="17" y="304">5.94</text><text x="72" y="307">7.53</text><text x="125" y="310">5.50</text><text x="178" y="313">4.13</text><text x="232" y="315">1.64</text><text x="285" y="316">4.22</text><text x="339" y="317">3.28</text><text x="393" y="318">2.31</text><text x="447" y="318">1.78</text><text x="500" y="318">0.0964</text><text x="554" y="318">3.23</text><text x="607" y="317">1.91</text><text x="661" y="317">3.58</text><text x="715" y="315">2.40</text><text x="768" y="314">3.18</text><text x="821" y="312">2.83</text><text x="875" y="310">6.30</text><text x="929" y="307">5.45</text><text x="979" y="303">4.x</text>
<text x="14" y="369">10.3</text><text x="68" y="372">8.85</text><text x="122" y="374">11.6</text><text x="176" y="377">7.96</text><text x="230" y="378">5.28</text><text x="284" y="380">4.24</text><text x="338" y="381">2.30</text><text x="392" y="381">1.07</text><text x="446" y="382">0.496</text><text x="500" y="382">0.489</text><text x="554" y="382">3.29</text><text x="608" y="381">1.64</text><text x="662" y="381">0.748</text><text x="716" y="379">1.34</text><text x="771" y="378">0.524</text><text x="824" y="376">2.16</text><text x="878" y="373">1.18</text><text x="932" y="371">1.17</text>
<text x="9" y="433">7.51</text><text x="65" y="436">5.63</text><text x="119" y="438">5.81</text><text x="174" y="441">7.85</text><text x="228" y="442">8.28</text><text x="283" y="444">5.01</text><text x="337" y="445">0.377</text><text x="391" y="446">1.21</text><text x="446" y="446">1.39</text><text x="500" y="446">2.26</text><text x="555" y="446">1.30</text><text x="609" y="446">1.50</text><text x="663" y="445">2.18</text><text x="718" y="443">2.29</text><text x="772" y="442">1.13</text><text x="827" y="440">3.03</text><text x="881" y="437">2.02</text><text x="935" y="435">1.46</text>
<text x="12" y="497">.56</text><text x="62" y="500">5.96</text><text x="117" y="502">7.19</text><text x="172" y="504">1.70</text><text x="226" y="506">6.51</text><text x="281" y="508">2.34</text><text x="336" y="509">3.15</text><text x="390" y="509">2.49</text><text x="446" y="510">3.26</text><text x="500" y="510">3.93</text><text x="554" y="510">2.11</text><text x="610" y="510">3.10</text><text x="665" y="509">1.46</text><text x="719" y="507">2.56</text><text x="773" y="506">1.31</text><text x="829" y="504">3.59</text><text x="884" y="501">1.02</text><text x="939" y="499">3.64</text>
<text x="8" y="561">.08</text><text x="58" y="564">4.01</text><text x="114" y="566">7.88</text><text x="169" y="567">8.74</text><text x="224" y="569">3.39</text><text x="279" y="572">2.81</text><text x="335" y="572">3.49</text><text x="390" y="573">2.29</text><text x="444" y="573">2.64</text><text x="501" y="573">3.69</text><text x="556" y="573">2.98</text><text x="611" y="572">4.40</text><text x="666" y="572">3.69</text><text x="721" y="571">3.48</text><text x="777" y="569">4.14</text><text x="832" y="567">4.66</text><text x="886" y="565">4.80</text><text x="942" y="562">3.89</text>
<text x="4" y="625">.41</text><text x="56" y="628">6.17</text><text x="110" y="630">9.01</text><text x="167" y="631">7.32</text><text x="222" y="633">0.326</text><text x="277" y="635">2.51</text><text x="334" y="636">3.97</text><text x="389" y="637">2.39</text><text x="445" y="637">2.36</text><text x="500" y="637">2.23</text><text x="556" y="637">1.57</text><text x="611" y="636">3.21</text><text x="667" y="635">4.38</text><text x="722" y="634">2.81</text><text x="778" y="632">5.33</text><text x="834" y="631">7.84</text><text x="890" y="628">8.23</text><text x="946" y="625">8.37</text>
<text x="3" y="687">.70</text><text x="52" y="690">9.55</text><text x="108" y="693">9.61</text><text x="165" y="695">4.10</text><text x="220" y="697">2.55</text><text x="276" y="699">1.51</text><text x="332" y="700">2.05</text><text x="388" y="701">2.11</text><text x="445" y="701">2.62</text><text x="500" y="701">2.02</text><text x="556" y="701">0.535</text><text x="613" y="700">3.15</text><text x="669" y="699">2.74</text><text x="725" y="698">3.87</text><text x="780" y="696">5.96</text><text x="837" y="694">6.94</text><text x="892" y="692">4.14</text><text x="949" y="689">7.39</text>
<text x="0" y="750">.8</text><text x="49" y="754">7.48</text><text x="106" y="757">5.60</text><text x="162" y="760">4.20</text><text x="219" y="762">3.07</text><text x="275" y="764">2.90</text><text x="331" y="765">3.08</text><text x="388" y="765">2.51</text><text x="444" y="766">2.23</text><text x="501" y="766">3.67</text><text x="557" y="766">4.29</text><text x="614" y="765">3.92</text><text x="670" y="765">2.19</text><text x="727" y="764">2.39</text><text x="783" y="762">4.08</text><text x="839" y="760">4.36</text><text x="896" y="758">3.93</text><text x="952" y="755">2.90</text>
</g>
<rect x="1" y="1" width="497" height="42" fill="#fff" fill-opacity=".7"/>
<text x="4" y="17" font-size="14.47" fill="#000">ECMWF-INDEX-ANAL LCL-Height (m) Monday 29-09-2025 02:30</text>
<text x="4" y="37" font-size="14.47" fill="#333">ECMWF-INDEX-ANAL WindShear_ (m/s) 0-1km Monday 29-09-2025 02:30</text>
<rect x="572" y="837" width="405" height="60" fill="#fff" fill-opacity=".6"/>
<g font-size="12" text-anchor="middle" fill="#000">
<text x="639" y="856">ECMWF-INDEX-ANAL</text>
<text x="639" y="873">LCL-Height</text>
<text x="639" y="890">m</text>
<text x="730" y="885">100</text><text x="772" y="885">400</text><text x="814" y="885">800</text><text x="856" y="885">1200</text><text x="898" y="885">1600</text><text x="940" y="885">2000</text>
</g>
<g stroke="#000" stroke-width="1">
<rect x="709.5" y="844.5" width="21" height="22" fill="#fff"/>
<rect x="730.5" y="844.5" width="21" height="22" fill="#aaf"/>
<rect x="751.5" y="844.5" width="21" height="22" fill="#a5f"/>
<rect x="772.5" y="844.5" width="21" height="22" fill="#a0f"/>
<rect x="793.5" y="844.5" width="21" height="22" fill="#d5007f"/>
<rect x="814.5" y="844.5" width="21" height="22" fill="#f00"/>
<rect x="835.5" y="844.5" width="21" height="22" fill="#fa0"/>
<rect x="856.5" y="844.5" width="21" height="22" fill="#ff0"/>
<rect x="877.5" y="844.5" width="21" height="22" fill="#af0"/>
<rect x="898.5" y="844.5" width="21" height="22" fill="#5a0"/>
<rect x="919.5" y="844.5" width="21" height="22" fill="#00aa7f"/>
<rect x="940.5" y="844.5" width="21" height="22" fill="#0af"/>
<path d="M730.5 867v7M772.5 867v7M814.5 867v7M856.5 867v7M898.5 867v7M940.5 867v7" fill="none"/>
</g>
</svg>
</body></html>
